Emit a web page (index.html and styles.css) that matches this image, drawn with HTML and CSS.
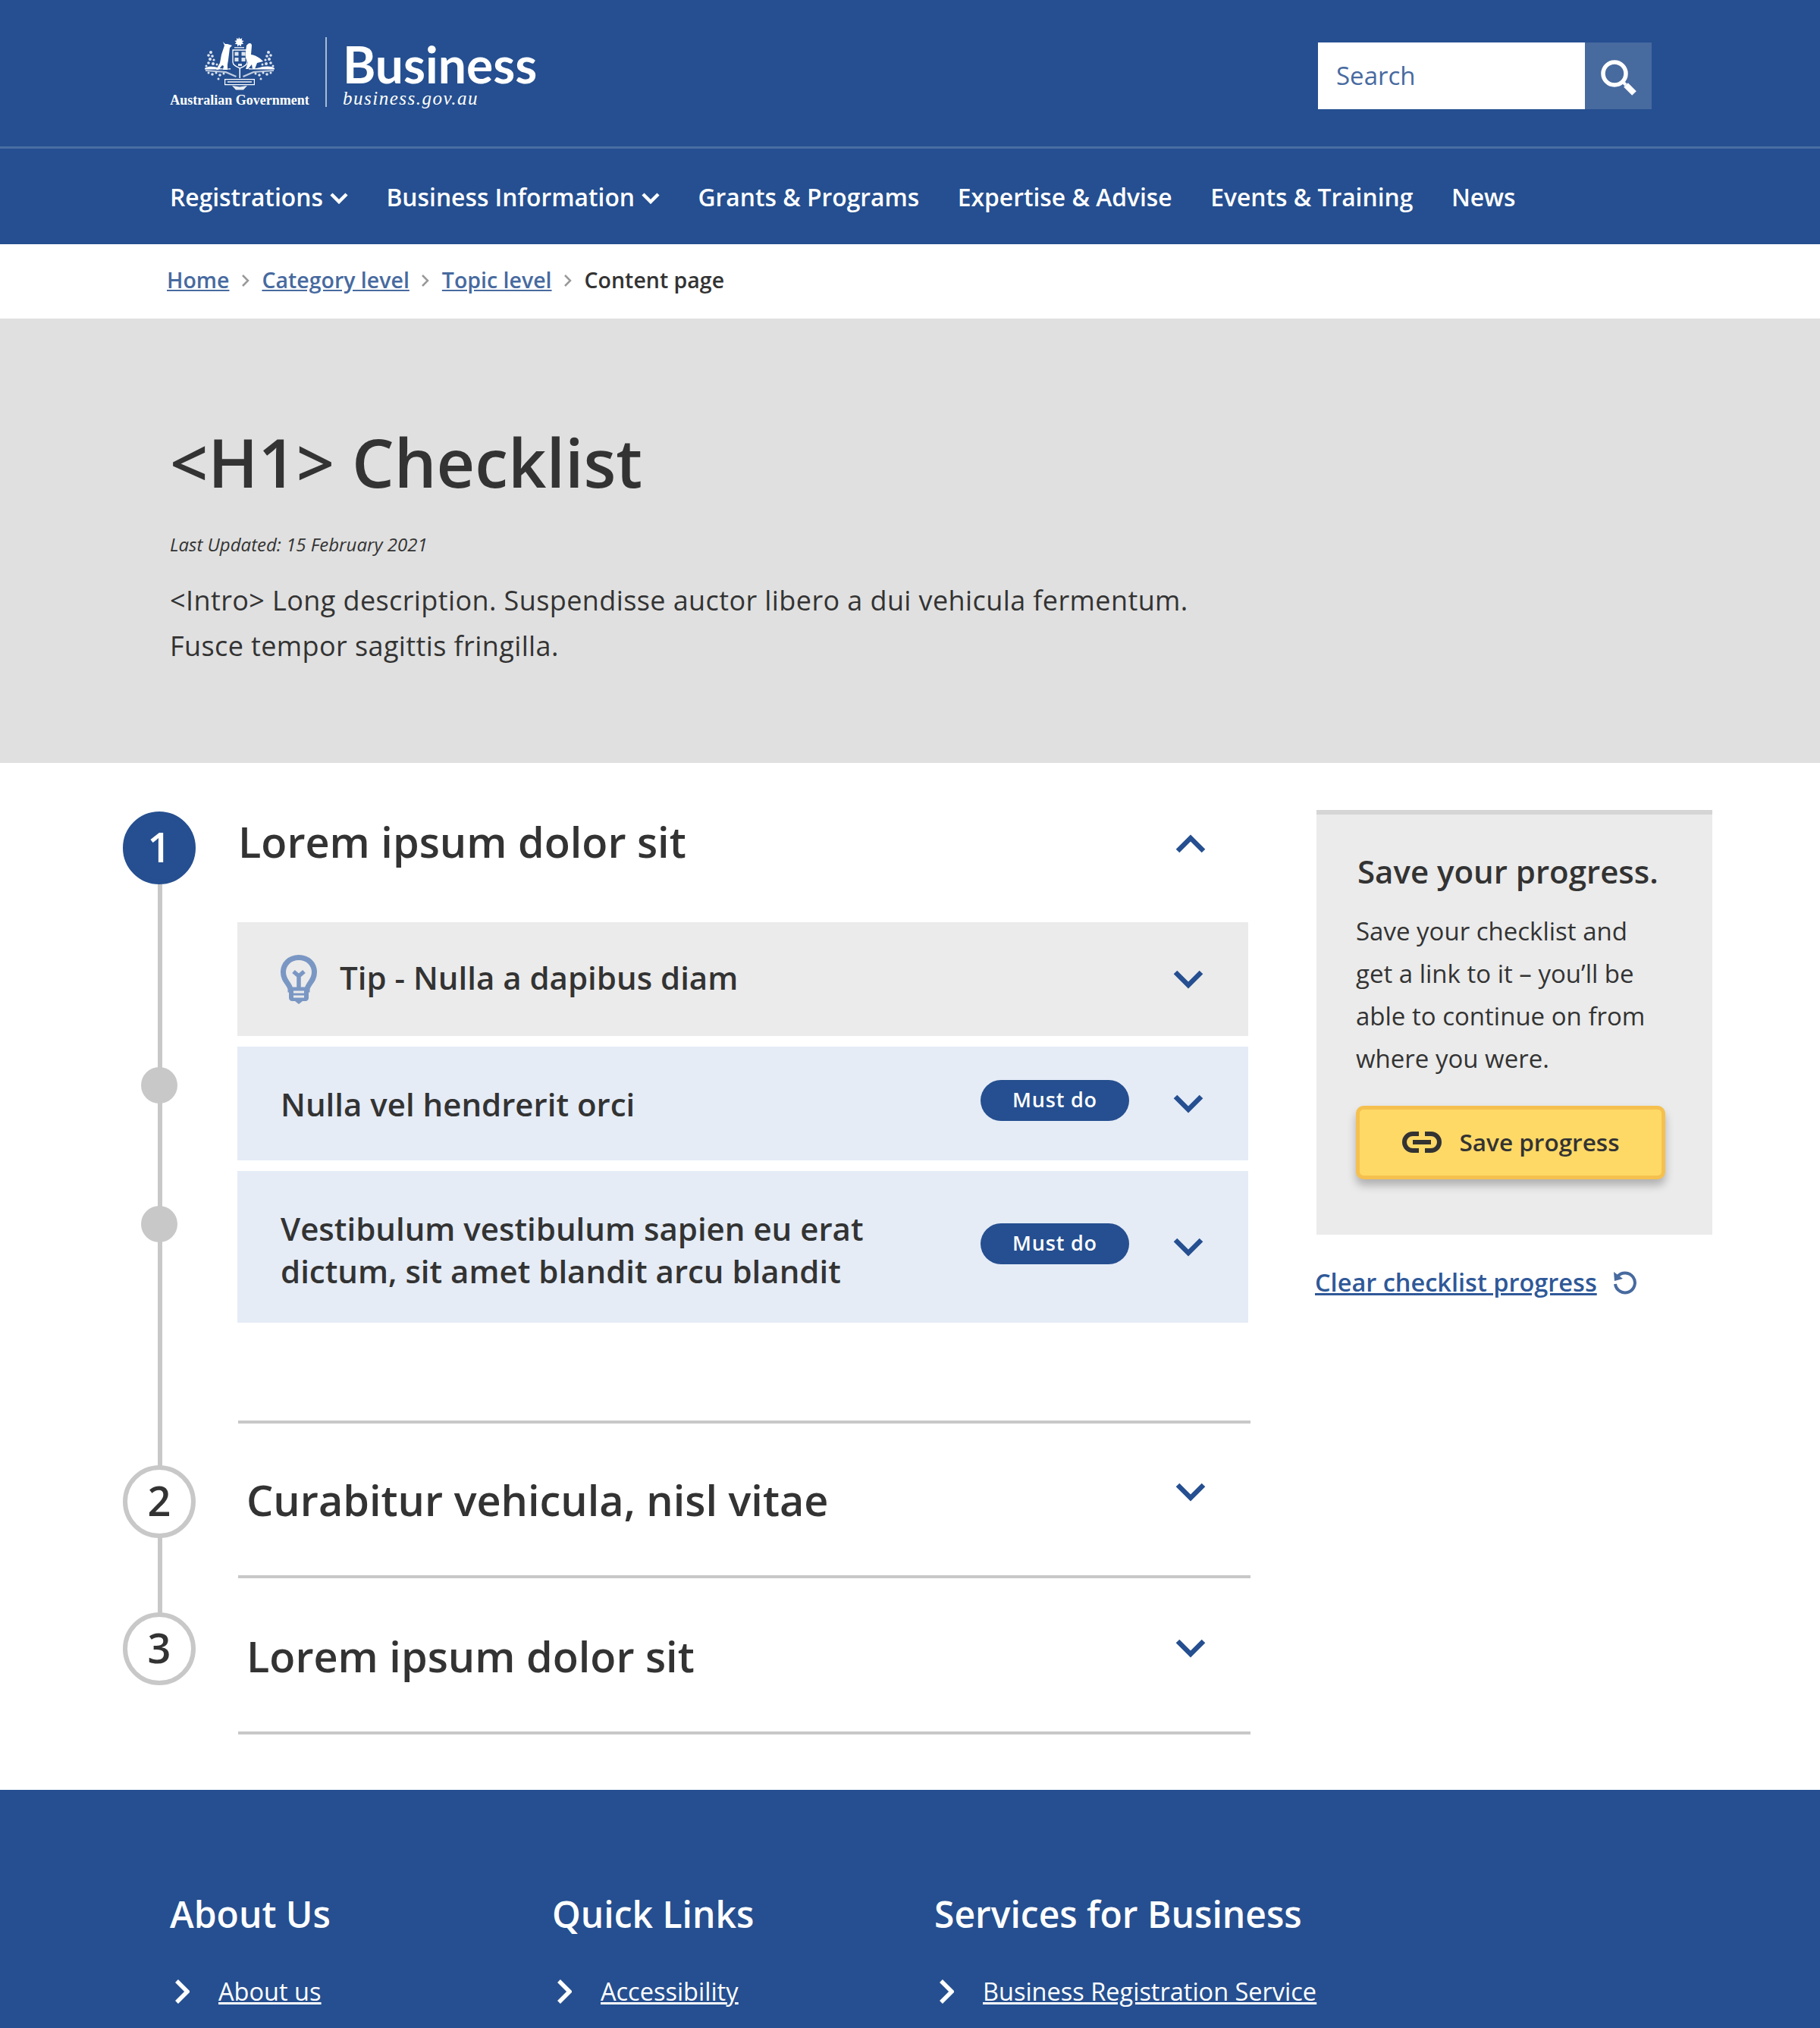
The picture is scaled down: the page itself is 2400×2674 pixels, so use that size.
FILE: index.html
```html
<!DOCTYPE html>
<html lang="en">

<head>
  <meta charset="UTF-8" />
  <title>Checklist</title>
  <link rel="stylesheet" href="styles.css">
</head>

<body>
  <header class="masthead">
    <div class="masthead-inner">
      <a class="logo" href="#">
        <div class="logo-gov">
          <svg class="crest" viewBox="0 0 96 70" fill="#fff">
            <!-- star -->
            <path d="M47 0l1.500 2.500 2.800-1.200-.6 3 3 .7-2.500 1.800 2 2.200-3 .2-.4 3-2.300-2-2.300 2-.4-3-3-.2 2-2.200-2.500-1.800 3-.7-.6-3 2.800 1.200z" />
            <rect x="41" y="13" width="13" height="1.500" opacity=".8" />
            <!-- kangaroo -->
            <path d="M26 6l3 3 3 0 6 2-3 3-1 8-1 8-1 6 0 7h-6l1-5-2-1-5 6-3 0 5-9 2-11 3-9 1-3z" />
            <!-- shield -->
            <path d="M39 17h19v16c0 4-5 6-9.500 8-4.500-2-9.500-4-9.500-8z" fill="none" stroke="#fff" stroke-width="1.300" />
            <path d="M41.500 19.500h5v5h-5zM50.500 19.500h5v5h-5zM41.500 27h5v5h-5zM50.500 27h5v5h-5zM46 35h5v3h-5z" opacity=".85" />
            <!-- emu -->
            <path d="M59 9c2-2 5-1 5 2l-1 12c4 0 12 4 16 9l-8 2-3 8h-3l-1-6-5 6h-3l3-9c-3-4-4-8-3-14l1-8z" />
            <!-- ground and wattle branches -->
            <path d="M2 41c6-4 15-2 20 0 6 1 10 1 14 0v1.500H2zM60 41c6 1 12 0 18-2 6-1 13-1 16 2v1.500H60z" />
            <g opacity=".85">
              <circle cx="10" cy="20" r="2" /><circle cx="7" cy="24" r="1.800" /><circle cx="12" cy="25" r="1.800" />
              <circle cx="9" cy="29" r="2" /><circle cx="14" cy="30" r="1.600" /><circle cx="7" cy="34" r="1.800" />
              <circle cx="13" cy="35" r="2" /><circle cx="4" cy="38" r="1.500" /><circle cx="18" cy="36" r="1.500" />
              <circle cx="86" cy="20" r="2" /><circle cx="89" cy="24" r="1.800" /><circle cx="84" cy="25" r="1.800" />
              <circle cx="87" cy="29" r="2" /><circle cx="82" cy="30" r="1.600" /><circle cx="89" cy="34" r="1.800" />
              <circle cx="83" cy="35" r="2" /><circle cx="92" cy="38" r="1.500" /><circle cx="78" cy="36" r="1.500" />
              <circle cx="7" cy="47" r="1.500" /><circle cx="12" cy="49" r="1.800" /><circle cx="17" cy="47" r="1.500" />
              <circle cx="22" cy="50" r="1.800" /><circle cx="27" cy="48" r="1.500" /><circle cx="20" cy="55" r="1.500" />
              <circle cx="89" cy="47" r="1.500" /><circle cx="84" cy="49" r="1.800" /><circle cx="79" cy="47" r="1.500" />
              <circle cx="74" cy="50" r="1.800" /><circle cx="69" cy="48" r="1.500" /><circle cx="76" cy="55" r="1.500" />
            </g>
            <path d="M3 45l26 2 14 6 1-2-14-6-27-2zM93 45l-26 2-14 6-1-2 14-6 27-2z" opacity=".7" />
            <path d="M47.500 41v13h1.500V41z" />
            <path d="M28.600 55.600h38.800v7H28.600z" fill="none" stroke="#fff" stroke-width="1.200" />
            <path d="M32 58h32v2H32z" opacity=".7" />
            <path d="M38 64l10 1.500 10-1.500-5 5.500h-10z" opacity=".9" />
          </svg>
          <span class="logo-gov-text">Australian Government</span>
        </div>
        <div class="logo-site">
          <span class="logo-name">Business</span>
          <span class="logo-url">business.gov.au</span>
        </div>
      </a>
      <form class="search">
        <div class="search-input">Search</div>
        <button class="search-btn" type="button">
          <svg viewBox="0 0 48 48" width="48" height="48" fill="none" stroke="#fff">
            <circle cx="18" cy="18" r="15" stroke-width="5.500" />
            <path d="M29 29l4 4" stroke-width="4" />
            <path d="M33 33l11 11" stroke-width="8" />
          </svg>
        </button>
      </form>
    </div>
  </header>

  <nav class="mainnav">
    <a href="#">Registrations <svg class="nav-chev" viewBox="0 0 24 16"><path d="M2 3l10 10L22 3" /></svg></a>
    <a href="#">Business Information <svg class="nav-chev" viewBox="0 0 24 16"><path d="M2 3l10 10L22 3" /></svg></a>
    <a href="#">Grants &amp; Programs</a>
    <a href="#">Expertise &amp; Advise</a>
    <a href="#">Events &amp; Training</a>
    <a href="#">News</a>
  </nav>

  <div class="breadcrumbs">
    <a href="#">Home</a>
    <svg class="crumb-sep" viewBox="0 0 12 18"><path d="M2 2l7 7-7 7" /></svg>
    <a href="#">Category level</a>
    <svg class="crumb-sep" viewBox="0 0 12 18"><path d="M2 2l7 7-7 7" /></svg>
    <a href="#">Topic level</a>
    <svg class="crumb-sep" viewBox="0 0 12 18"><path d="M2 2l7 7-7 7" /></svg>
    <span class="crumb-current">Content page</span>
  </div>

  <section class="hero">
    <h1>&lt;H1&gt; Checklist</h1>
    <p class="updated">Last Updated: 15 February 2021</p>
    <p class="intro">&lt;Intro&gt; Long description. Suspendisse auctor libero a dui vehicula fermentum.<br>Fusce tempor sagittis fringilla.</p>
  </section>

  <main class="content">
    <div class="steps">
      <div class="step step-open">
        <div class="step-num step-num-active">1</div>
        <div class="step-head">
          <h2>Lorem ipsum dolor sit</h2>
          <svg class="chev chev-up" viewBox="0 0 40 25"><path d="M3 22L20 5l17 17" /></svg>
        </div>
      </div>

      <div class="task">
        <div class="task-mark"></div>
        <div class="task-box task-tip">
          <svg class="bulb" viewBox="0 0 48 65">
            <path d="M24 3.500C12 3.500 3.500 12 3.500 23c0 7 3 11 6 15 2 3 3.500 5 3.500 8h22c0-3 1.500-5 3.500-8 3-4 6-8 6-15C44.500 12 36 3.500 24 3.500z" fill="none" stroke="#7a97c4" stroke-width="7" />
            <path d="M24 44V28M24 28l-7-6M24 28l7-6" fill="none" stroke="#7a97c4" stroke-width="5.500" />
            <path d="M11 43h26v14c0 2-2 4-4 4h-4l-5 4-5-4h-4c-2 0-4-2-4-4z" fill="#7a97c4" />
            <path d="M17 49h14M17 55h14" stroke="#ebebeb" stroke-width="3" />
          </svg>
          <span class="task-text task-text-tip">Tip - Nulla a dapibus diam</span>
          <svg class="chev" viewBox="0 0 40 25"><path d="M3 3l17 17L37 3" /></svg>
        </div>
      </div>

      <div class="task">
        <div class="task-mark"><span class="dot"></span></div>
        <div class="task-box">
          <span class="task-text task-text-must">Nulla vel hendrerit orci</span>
          <span class="pill">Must do</span>
          <svg class="chev" viewBox="0 0 40 25"><path d="M3 3l17 17L37 3" /></svg>
        </div>
      </div>

      <div class="task task-last">
        <div class="task-mark"><span class="dot dot-tall"></span></div>
        <div class="task-box task-box-tall">
          <span class="task-text task-text-two">Vestibulum vestibulum sapien eu erat<br>dictum, sit amet blandit arcu blandit</span>
          <span class="pill">Must do</span>
          <svg class="chev" viewBox="0 0 40 25"><path d="M3 3l17 17L37 3" /></svg>
        </div>
      </div>

      <div class="step step-closed">
        <div class="step-num">2</div>
        <div class="step-head step-head-closed">
          <h2>Curabitur vehicula, nisl vitae</h2>
          <svg class="chev" viewBox="0 0 40 25"><path d="M3 3l17 17L37 3" /></svg>
        </div>
      </div>

      <div class="step step-closed step-end">
        <div class="step-num">3</div>
        <div class="step-head step-head-closed step-head-end">
          <h2>Lorem ipsum dolor sit</h2>
          <svg class="chev" viewBox="0 0 40 25"><path d="M3 3l17 17L37 3" /></svg>
        </div>
      </div>
    </div>

    <aside class="side">
      <div class="save-panel">
        <h3>Save your progress.</h3>
        <p>Save your checklist and get a link to it – you’ll be able to continue on from where you were.</p>
        <button class="save-btn" type="button">
          <svg class="link-icon" viewBox="0 0 54 28" fill="none" stroke="#333" stroke-width="6">
            <path d="M23 3H15a11 11 0 0 0 0 22h8M31 3h8a11 11 0 0 1 0 22h-8" />
            <path d="M15 14h24" />
          </svg>
          <span class="save-label">Save progress</span>
        </button>
      </div>
      <a class="clear-link" href="#"><span>Clear checklist progress</span>
        <svg class="undo-icon" viewBox="0 0 34 34" fill="none">
          <path d="M7 9a13 13 0 1 1-3 10" stroke="#476a9f" stroke-width="4" />
          <path d="M2 3l1 12 11-3z" fill="#476a9f" />
        </svg>
      </a>
    </aside>
  </main>

  <footer class="footer">
    <div class="footer-col">
      <h4>About Us</h4>
      <a href="#"><svg class="foot-chev" viewBox="0 0 20 32"><path d="M3 2l14 14L3 30" /></svg><span>About us</span></a>
    </div>
    <div class="footer-col">
      <h4>Quick Links</h4>
      <a href="#"><svg class="foot-chev" viewBox="0 0 20 32"><path d="M3 2l14 14L3 30" /></svg><span>Accessibility</span></a>
    </div>
    <div class="footer-col">
      <h4>Services for Business</h4>
      <a href="#"><svg class="foot-chev" viewBox="0 0 20 32"><path d="M3 2l14 14L3 30" /></svg><span>Business Registration Service</span></a>
    </div>
  </footer>
</body>

</html>
```

FILE: styles.css
```css
* {
  margin: 0;
  padding: 0;
  box-sizing: border-box;
}

html,
body {
  width: 100%;
  height: 100%;
  overflow: hidden;
}

body {
  font-family: "Open Sans", "Noto Sans", sans-serif;
  color: #333;
  background: #fff;
}

/* masthead */
.masthead {
  background: #254f90;
  height: 196px;
  border-bottom: 3px solid #4a6ea3;
  padding: 0 222px 0 224px;
}

.masthead-inner {
  display: flex;
  justify-content: space-between;
  align-items: flex-start;
  padding-top: 49px;
}

.logo {
  display: flex;
  color: #fff;
  text-decoration: none;
}

.logo-gov {
  width: 207px;
  height: 92px;
  padding-right: 21px;
  border-right: 2px solid #a8bbd6;
  display: flex;
  flex-direction: column;
  align-items: center;
}

.crest {
  width: 96px;
  height: 70px;
  flex: none;
}

.logo-gov-text {
  font-family: "Liberation Serif", serif;
  font-weight: 700;
  font-size: 18px;
  white-space: nowrap;
  line-height: 22px;
  margin-top: 2px;
}

.logo-site {
  padding-left: 21px;
  display: flex;
  flex-direction: column;
}

.logo-name {
  font-family: Lato, sans-serif;
  font-size: 66px;
  font-weight: 700;
  line-height: 60px;
  margin-top: 6px;
}

.logo-url {
  font-family: "Liberation Serif", serif;
  font-style: italic;
  font-size: 25px;
  letter-spacing: 1.500px;
  line-height: 28px;
  margin-top: 1px;
}

.search {
  display: flex;
  margin-top: 7px;
}

.search-input {
  width: 352px;
  height: 88px;
  background: #fff;
  color: #476a9f;
  font-size: 33px;
  line-height: 88px;
  padding-left: 24px;
}

.search-btn {
  width: 88px;
  height: 88px;
  background: #476a9f;
  border: 0;
  display: flex;
  align-items: center;
  justify-content: center;
  padding: 6px 0 0 2px;
}

/* nav */
.mainnav {
  background: #254f90;
  height: 126px;
  padding-left: 224px;
  display: flex;
  align-items: center;
  gap: 50.500px;
}

.mainnav a {
  color: #fff;
  text-decoration: none;
  font-size: 31.800px;
  font-weight: 600;
  white-space: nowrap;
  display: flex;
  align-items: center;
  gap: 9px;
}

.nav-chev {
  width: 24px;
  height: 16px;
  margin-top: 3px;
}

.nav-chev path {
  fill: none;
  stroke: #fff;
  stroke-width: 4.500;
}

/* breadcrumbs */
.breadcrumbs {
  height: 94px;
  margin-bottom: 4px;
  padding-left: 220px;
  display: flex;
  align-items: center;
  gap: 15.500px;
  font-size: 28.500px;
  font-weight: 600;
}

.breadcrumbs a {
  color: #476a9f;
}

.crumb-sep {
  width: 12px;
  height: 18px;
  margin-top: 2px;
}

.crumb-sep path {
  fill: none;
  stroke: #999;
  stroke-width: 2.500;
}

.crumb-current {
  color: #333;
}

/* hero */
.hero {
  background: #e0e0e0;
  height: 586px;
  padding: 129px 0 0 224px;
}

.hero h1 {
  font-size: 88px;
  font-weight: 600;
  line-height: 120px;
}

.updated {
  font-size: 24px;
  font-style: italic;
  line-height: 34px;
  margin-top: 32px;
}

.intro {
  font-size: 36px;
  letter-spacing: .4px;
  line-height: 60px;
  margin-top: 27px;
}

/* main */
.content {
  display: flex;
  align-items: flex-start;
  padding: 62px 0 73px 162px;
}

.steps {
  width: 1487px;
  padding-top: 2px;
  position: relative;
  flex: none;
}

/* the line that joins the step circles, runs behind them */
.steps::before {
  content: "";
  position: absolute;
  left: 46px;
  top: 60px;
  bottom: 120px;
  width: 6px;
  background: #c8c8c8;
}

.step {
  display: flex;
  position: relative;
  align-items: flex-start;
}

.step-num {
  width: 96px;
  height: 96px;
  flex: none;
  border-radius: 50%;
  background: #fff;
  border: 6px solid #c8c8c8;
  font-size: 54px;
  font-weight: 600;
  line-height: 80px;
  text-align: center;
  margin-right: 56px;
}

.step-num-active {
  background: #254f90;
  border-color: #254f90;
  color: #fff;
}

.step-head {
  flex: 1;
  display: flex;
  align-items: flex-start;
  justify-content: space-between;
  padding-right: 59px;
  height: 146px;
}

.step-head h2 {
  font-size: 55.800px;
  font-weight: 600;
  line-height: 78px;
}

.step-closed .step-num {
  margin-top: 59px;
}

.step-head-closed {
  border-top: 4px solid #c8c8c8;
  height: 204px;
}

.step-head-closed h2 {
  padding: 61px 0 0 11px;
}

.step-head-closed .chev {
  margin-top: 78px;
}

.step-head-end {
  height: 210px;
  border-bottom: 4px solid #c8c8c8;
}

.step-end .step-num {
  margin-top: 49px;
}

.step-head-end h2 {
  padding-top: 63px;
}

.step-head-end .chev {
  margin-top: 80px;
}

.chev {
  width: 40px;
  height: 25px;
  flex: none;
}

.chev path {
  fill: none;
  stroke: #254f90;
  stroke-width: 6.500;
}

.chev-up {
  margin-top: 30px;
}

.task {
  display: flex;
  position: relative;
  margin-bottom: 14px;
}

.task-last {
  margin-bottom: 129px;
}

.task-mark {
  width: 96px;
  margin-right: 55px;
  flex: none;
  display: flex;
  justify-content: center;
  align-items: flex-start;
}

.dot {
  width: 48px;
  height: 48px;
  border-radius: 50%;
  background: #c8c8c8;
  margin-top: 27px;
}

.dot-tall {
  margin-top: 46px;
}

.task-box {
  width: 1333px;
  min-height: 150px;
  background: #e5ecf6;
  display: flex;
  align-items: center;
  padding: 0 59px 0 57px;
}

.task-tip {
  background: #ebebeb;
}

.task-box-tall {
  min-height: 200px;
}

.bulb {
  width: 48px;
  height: 65px;
  flex: none;
  margin-right: 30px;
}

.task-text {
  font-size: 42px;
  font-weight: 600;
  line-height: 56px;
  flex: 1;
}

.task-text-tip {
  margin-top: -4px;
}

.task-text-must {
  margin-top: 2px;
}

.task-text-two {
  margin-top: 8px;
}

.pill {
  width: 196px;
  height: 54px;
  border-radius: 27px;
  background: #254f90;
  color: #fff;
  font-size: 27px;
  font-weight: 600;
  letter-spacing: .8px;
  line-height: 52px;
  text-align: center;
  margin-right: 58px;
  margin-top: -8px;
}

/* side panel */
.side {
  width: 522px;
  margin-left: 87px;
  flex: none;
}

.save-panel {
  background: #ebebeb;
  border-top: 6px solid #d5d5d5;
  height: 560px;
  padding: 43px 0 0 52px;
}

.save-panel h3 {
  font-size: 42px;
  font-weight: 600;
  line-height: 64px;
  padding-left: 2px;
}

.save-panel p {
  font-size: 33px;
  line-height: 56px;
  width: 390px;
  margin-top: 19px;
}

.save-btn {
  width: 408px;
  height: 97px;
  margin-top: 34px;
  display: flex;
  align-items: center;
  justify-content: center;
  gap: 22px;
  background: #ffd966;
  border: 5px solid #f5c04e;
  border-radius: 10px;
  box-shadow: 0 8px 12px rgba(0, 0, 0, .25);
  font-family: inherit;
  font-size: 31.500px;
  font-weight: 600;
  color: #333;
}

.save-label {
  margin-top: -3px;
}

.link-icon {
  width: 54px;
  height: 28px;
  margin-top: -2px;
}

.clear-link {
  display: flex;
  align-items: center;
  gap: 20px;
  margin-top: 40px;
  margin-left: -2px;
  color: #2f5898;
  font-size: 32.500px;
  font-weight: 600;
  text-decoration: none;
}

.clear-link span {
  text-decoration: underline;
}

.undo-icon {
  width: 34px;
  height: 34px;
}

/* footer */
.footer {
  background: #254f90;
  height: 316px;
  padding: 131px 0 0 224px;
  display: flex;
  color: #fff;
}

.footer-col {
  width: 504px;
}

.footer-col h4 {
  font-size: 48px;
  font-weight: 600;
  line-height: 66px;
}

.footer-col a {
  display: flex;
  align-items: center;
  gap: 38px;
  margin-top: 46px;
  color: #fff;
  font-size: 32.500px;
  padding-left: 6px;
  white-space: nowrap;
}

.footer-col span {
  text-decoration: underline;
}

.foot-chev {
  width: 20px;
  height: 32px;
  flex: none;
}

.foot-chev path {
  fill: none;
  stroke: #fff;
  stroke-width: 5.500;
}
```
